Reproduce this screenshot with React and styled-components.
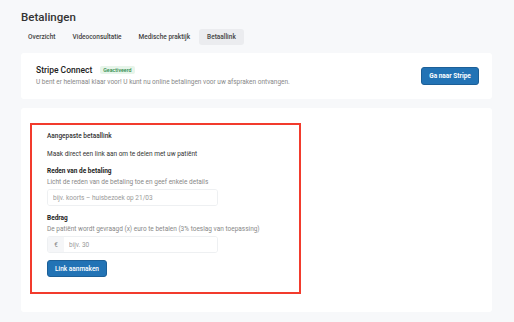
import React from 'react'
import styled, { createGlobalStyle } from 'styled-components'

const GlobalStyle = createGlobalStyle`
  html, body {
    margin: 0;
    padding: 0;
    background: #f7f8fa;
    font-family: Roboto, "Liberation Sans", Arial, sans-serif;
    color: #333;
  }
  * { box-sizing: border-box; }
`

const tabs = ['Overzicht', 'Videoconsultatie', 'Medische praktijk', 'Betaallink']

const App = () => {
  return (
    <>
      <GlobalStyle />
      <ScPage>
        <ScTitle>Betalingen</ScTitle>
        <ScTabs>
          {tabs.map((t) => (
            <ScTab key={t} active={t === 'Betaallink'}>{t}</ScTab>
          ))}
        </ScTabs>

        <ScCard>
          <ScStripeRow>
            <div>
              <ScCardHead>
                <ScCardTitle>Stripe Connect</ScCardTitle>
                <ScBadge>Geactiveerd</ScBadge>
              </ScCardHead>
              <ScMuted>U bent er helemaal klaar voor! U kunt nu online betalingen voor uw afspraken ontvangen.</ScMuted>
            </div>
            <ScButton>Ga naar Stripe</ScButton>
          </ScStripeRow>
        </ScCard>

        <ScFormCard>
          <ScHighlight>
            <ScSection>Aangepaste betaallink</ScSection>
            <ScIntro>Maak direct een link aan om te delen met uw patiënt</ScIntro>

            <ScLabel>Reden van de betaling</ScLabel>
            <ScHelp>Licht de reden van de betaling toe en geef enkele details</ScHelp>
            <ScInputBox>
              <ScInput placeholder="bijv. koorts – huisbezoek op 21/03" />
            </ScInputBox>

            <ScLabel second>Bedrag</ScLabel>
            <ScHelp>De patiënt wordt gevraagd (x) euro te betalen (3% toeslag van toepassing)</ScHelp>
            <ScInputBox>
              <ScPrefix>€</ScPrefix>
              <ScInput placeholder="bijv. 30" />
            </ScInputBox>

            <ScSubmit>Link aanmaken</ScSubmit>
          </ScHighlight>
        </ScFormCard>
      </ScPage>
    </>
  )
}

const ScPage = styled.div`
  width: 514px;
  height: 322px;
  padding: 9px 22px 0 21px;
  overflow: hidden;
`

const ScTitle = styled.div`
  font-size: 11.5px;
  line-height: 16px;
  font-weight: 500;
  color: #333;
`

const ScTabs = styled.div`
  display: flex;
  gap: 1px;
  margin: 4px 0 8px -1px;
`

const ScTab = styled.div`
  height: 16px;
  padding: 0 8px;
  display: flex;
  align-items: center;
  font-size: 6.5px;
  font-weight: 500;
  color: #444;
  border-radius: 3px;
  background: ${(p) => (p.active ? '#ebecef' : 'transparent')};
`

const ScCard = styled.div`
  background: #fff;
  border-radius: 3px;
  padding: 11px 13px 0 15px;
  height: 46px;
`

const ScStripeRow = styled.div`
  display: flex;
  justify-content: space-between;
  align-items: center;
`

const ScCardHead = styled.div`
  display: flex;
  align-items: center;
  gap: 8px;
  height: 12px;
`

const ScCardTitle = styled.div`
  font-size: 8.5px;
  font-weight: 500;
  color: #222;
`

const ScBadge = styled.span`
  background: #e7f5ea;
  color: #2f8a4a;
  font-size: 5.3px;
  font-weight: 500;
  padding: 1px 3px;
  border-radius: 2px;
  line-height: 6px;
`

const ScMuted = styled.div`
  margin-top: 2px;
  font-size: 6.5px;
  line-height: 9px;
  color: #888;
`

const ScButton = styled.div`
  width: 58px;
  height: 18px;
  background: #2273b5;
  border: 1px solid #1c5f97;
  color: #fff;
  border-radius: 3px;
  font-size: 6.5px;
  font-weight: 700;
  display: flex;
  align-items: center;
  justify-content: center;
`

const ScFormCard = styled.div`
  margin-top: 9px;
  background: #fff;
  border-radius: 3px;
  height: 204px;
  padding: 15px 0 0 9px;
`

const ScHighlight = styled.div`
  width: 271px;
  height: 171px;
  border: 2px solid #f23b2d;
  padding: 6px 0 0 15px;
  display: flex;
  flex-direction: column;
  align-items: flex-start;
`

const ScSection = styled.div`
  font-size: 6.5px;
  line-height: 10px;
  font-weight: 500;
  color: #333;
`

const ScIntro = styled.div`
  margin-top: 8px;
  font-size: 6.5px;
  line-height: 10px;
  color: #333;
`

const ScLabel = styled.div`
  margin-top: ${(p) => (p.second ? '7px' : '7px')};
  font-size: 6.5px;
  line-height: 10px;
  font-weight: 700;
  color: #222;
`

const ScHelp = styled.div`
  margin-top: 1px;
  font-size: 6.5px;
  line-height: 10px;
  color: #888;
`

const ScInputBox = styled.div`
  margin-top: 2px;
  width: 171px;
  height: 17px;
  display: flex;
  border: 1px solid #eef0f2;
  border-radius: 3px;
  overflow: hidden;
`

const ScPrefix = styled.div`
  width: 16px;
  background: #f5f6f8;
  color: #888;
  font-size: 6.5px;
  display: flex;
  align-items: center;
  justify-content: center;
`

const ScInput = styled.input`
  flex: 1;
  border: none;
  outline: none;
  padding: 0 5px;
  font-family: inherit;
  font-size: 6.5px;
  color: #333;
  background: #fff;
  &::placeholder { color: #999; }
`

const ScSubmit = styled.div`
  margin-top: 7px;
  width: 60px;
  height: 17px;
  background: #2273b5;
  border: 1px solid #1c5f97;
  border-radius: 3px;
  color: #fff;
  font-size: 6.5px;
  font-weight: 500;
  display: flex;
  align-items: center;
  justify-content: center;
`

export default App
